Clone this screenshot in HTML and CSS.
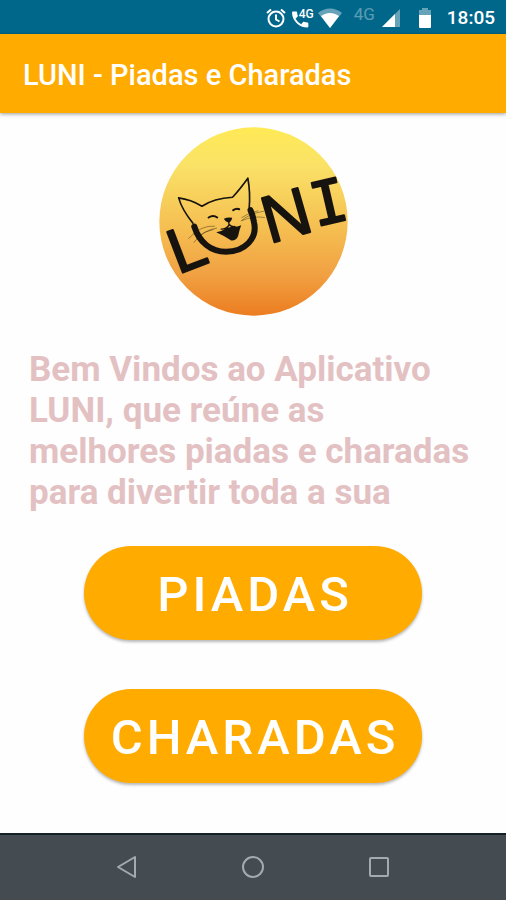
FILE: index.html
```html
<!DOCTYPE html>
<html lang="pt-BR">
<head>
<meta charset="utf-8">
<meta name="viewport" content="width=device-width, initial-scale=1">
<title>LUNI - Piadas e Charadas</title>
<link rel="stylesheet" href="styles.css">
</head>
<body>
<div class="status">
  <svg class="icon-alarm" viewBox="0 0 20 20" aria-hidden="true" fill="none" stroke="currentColor" stroke-width="2"><circle cx="10" cy="11" r="7.5"/><path d="M10 6.500v5l3.500 2M1 5l4-3.500M19 5l-4-3.500"/></svg>
  <span class="call">
    <svg class="icon-phone" viewBox="0 0 18 18" aria-hidden="true"><path fill="currentColor" d="M1 1h3.500c.6 0 1 .4 1 1 0 1.200.2 2.400.6 3.500.1.400 0 .8-.3 1L3.700 8.700a15 15 0 0 0 6 5.800l2-2.200c.3-.3.700-.4 1-.3 1.200.4 2.400.6 3.600.6.600 0 1 .4 1 1V17c0 .6-.4 1-1 1C7.500 18 0 10.500 0 2c0-.6.4-1 1-1z"/></svg>
    <span class="call-net">4G</span>
  </span>
  <svg class="icon-wifi" viewBox="0 0 24 20" aria-hidden="true"><path fill="currentColor" opacity=".4" d="M0 5C7-1 17-1 24 5L12 20z"/><path fill="currentColor" d="M3 8c6-4 12-4 18 0l-9 12z"/></svg>
  <span class="net">4G</span>
  <svg class="icon-signal" viewBox="0 0 18 18" aria-hidden="true"><path fill="currentColor" opacity=".4" d="M18 0v18H0z"/><path fill="currentColor" d="M13 5v13H0z"/></svg>
  <svg class="icon-battery" viewBox="0 0 12 20" aria-hidden="true"><path fill="currentColor" opacity=".4" d="M3 0h6v2h3v6H0V2h3z"/><path fill="currentColor" d="M0 7h12v12q0 1-1 1H1q-1 0-1-1z"/></svg>
  <time class="clock">18:05</time>
</div>
<header class="appbar"><h1 class="title">LUNI - Piadas e Charadas</h1></header>
<main class="content">
  <svg class="logo" viewBox="27 19 568 568" role="img" aria-label="LUNI">
    <defs>
      <linearGradient id="sun" x1="0" y1="0" x2="0" y2="1"><stop offset="0" stop-color="#ffea55"/><stop offset=".2" stop-color="#fae267"/><stop offset=".55" stop-color="#f5bd50"/><stop offset=".78" stop-color="#f1a143"/><stop offset="1" stop-color="#eb7d20"/></linearGradient>
    </defs>
    <circle cx="311" cy="303" r="283" fill="url(#sun)"/>
    <text class="letter" transform="translate(84 462) rotate(-21)">L</text>
    <text class="letter letter-wide" transform="translate(358 370) rotate(-16)">N</text>
    <text class="letter letter-slab" transform="translate(498 319) rotate(-13)">I</text>
    <g fill="none" stroke="#17130f" stroke-linecap="round" stroke-linejoin="round">
      <path stroke-width="5" d="M129 308C111 286 94 260 86 232q37 5 70 25 36-24 92-27 21-22 46-57 8 43 4 91"/>
      <path stroke-width="18" d="M133 318C148 365 182 394 229 394 284 394 325 354 312 303Q309 284 302 269"/>
      <path stroke-width="6" d="M176 291q14-9 26 0M250 269q9-6 18-3"/>
      <path stroke-width="4" d="M237 299v15q-7 12-23 12M237 311q6 9 18 7"/>
      <path stroke-width="2" opacity=".6" d="M194 317q-41-4-78 37M200 323q-42 6-68 43M190 327q-23 4-48 23M274 301q22-21 68-29M276 291q25-17 48-20M277 300q34-15 67-9"/>
    </g>
    <path fill="#17130f" d="M222 295q12-6 25-3-2 12-11 15-10-2-14-12zM199 335q18-2 32-13l17-3q13 1 26-5-6 15-9 32-5 15-21 14-22-15-45-25z"/>
  </svg>
  <p class="welcome">Bem Vindos ao Aplicativo LUNI, que reúne as melhores piadas e charadas para divertir toda a sua</p>
  <div class="actions">
    <button class="choice" type="button">PIADAS</button>
    <button class="choice" type="button">CHARADAS</button>
  </div>
</main>
<nav class="navbar" aria-label="Sistema">
  <button class="nav" type="button" aria-label="Voltar"><svg viewBox="0 0 24 24"><path d="M20 2v20L3 12z"/></svg></button>
  <button class="nav" type="button" aria-label="Início"><svg viewBox="0 0 24 24"><circle cx="12" cy="12" r="10"/></svg></button>
  <button class="nav" type="button" aria-label="Recentes"><svg viewBox="0 0 24 24"><rect x="3" y="3" width="18" height="18" rx="1"/></svg></button>
</nav>
</body>
</html>
```
FILE: styles.css
```css
* { box-sizing: border-box; }
body {
  margin: 0;
  min-height: 100vh;
  display: flex;
  flex-direction: column;
  background: #fefefe;
  font-family: Roboto, "Liberation Sans", sans-serif;
}
.status {
  height: 34px;
  padding: 2px 11px 0 0;
  display: flex;
  align-items: center;
  justify-content: flex-end;
  color: #fff;
  background: #00678b;
}
.icon-alarm { width: 20px; height: 20px; margin-right: 6px; }
.call { display: flex; }
.icon-phone { width: 17px; height: 18px; margin-top: 2px; }
.call-net { margin: 0 4px 0 -10px; font-size: 12px; line-height: 12px; font-weight: 500; }
.icon-wifi { width: 24px; height: 20px; margin-right: 12px; }
.net { font-size: 17px; line-height: 20px; margin: 0 7px 8px 0; opacity: .35; }
.icon-signal { width: 18px; height: 18px; margin-right: 19px; }
.icon-battery { width: 12px; height: 20px; margin-right: 16px; }
.clock { font-size: 19px; line-height: 24px; font-weight: 500; }
.appbar {
  height: 79px;
  padding: 2px 23px 0;
  display: flex;
  align-items: center;
  color: #fff;
  background: #ffab00;
  box-shadow: 0 1px 4px rgba(0, 0, 0, .4);
}
.title { margin: 0; font-size: 29px; line-height: 32px; font-weight: 500; }
.content {
  flex: 1;
  padding: 14px 29px 48px;
  display: flex;
  flex-direction: column;
  align-items: center;
}
.logo { display: block; width: 189px; height: 189px; overflow: visible; }
.letter {
  font-family: "Liberation Sans", sans-serif;
  font-size: 190px;
  fill: #17130f;
  stroke: #17130f;
  stroke-width: 6px;
  stroke-linejoin: round;
}
.letter-wide { font-size: 200px; }
.letter-slab { font-family: "DejaVu Sans Mono", monospace; font-size: 180px; }
.welcome {
  align-self: stretch;
  margin: 33px 0;
  color: #e3c1c3;
  font-size: 35px;
  line-height: 41px;
  font-weight: 700;
}
.actions { width: 338px; max-width: 100%; display: flex; flex-direction: column; gap: 49px; }
.choice {
  height: 94px;
  padding: 4px 0 0 4px;
  border: 0;
  border-radius: 48px;
  color: #fff;
  background: #ffab00;
  box-shadow: 0 2px 3px rgba(0, 0, 0, .28);
  font: 500 49px/56px Roboto, "Liberation Sans", sans-serif;
  letter-spacing: 4px;
}
.navbar {
  height: 67px;
  padding: 0 64px 2px;
  display: flex;
  align-items: center;
  justify-content: space-around;
  background: #444c52;
  border-top: 2px solid #142127;
}
.nav { width: 48px; height: 48px; padding: 12px; border: 0; background: none; color: #a4abae; }
.nav svg { display: block; width: 24px; height: 24px; fill: none; stroke: currentColor; stroke-width: 2px; stroke-linejoin: round; }
```
